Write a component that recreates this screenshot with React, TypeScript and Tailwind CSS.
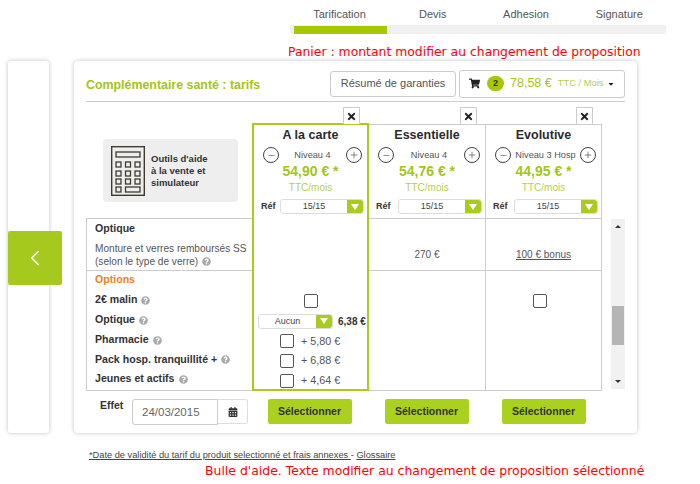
import React from "react";
import { FaShoppingCart, FaCalendarAlt, FaQuestionCircle, FaTimes, FaCaretDown } from "react-icons/fa";
import { ChevronLeft, Minus, Plus } from "lucide-react";

const plans = [
  { name: "A la carte", level: "Niveau 4", price: "54,90 €", selected: true },
  { name: "Essentielle", level: "Niveau 4", price: "54,76 €", selected: false },
  { name: "Evolutive", level: "Niveau 3 Hosp", price: "44,95 €", selected: false },
];

const Help = () => (
  <FaQuestionCircle className="inline-block w-[9px] h-[9px] ml-1 text-[#a9a9a9] align-[-1px]" />
);

const Arrow = () => (
  <span className="w-[16px] self-stretch bg-[#a9cc1c] rounded-r-[2px] flex items-center justify-center">
    <span className="w-0 h-0 border-x-[4px] border-x-transparent border-t-[6px] border-t-white" />
  </span>
);

const Check = () => (
  <span className="block w-[14px] h-[14px] border border-[#555] rounded-[2px] bg-white" />
);

const Round = ({ children }: { children: React.ReactNode }) => (
  <span className="w-[16px] h-[16px] shrink-0 rounded-full border border-[#444] flex items-center justify-center text-[#444]">
    {children}
  </span>
);

const Calculator = () => (
  <svg width="34" height="50" viewBox="0 0 34 50" className="shrink-0" fill="none" stroke="#3d3a2e" strokeWidth="1.3">
    <rect x="0.7" y="0.7" width="32.6" height="48.6" strokeWidth="1.4" />
    <rect x="5" y="6" width="24" height="5" />
    <rect x="5" y="16" width="5" height="5" />
    <rect x="14.5" y="16" width="5" height="5" />
    <rect x="24" y="16" width="5" height="5" />
    <rect x="5" y="25" width="5" height="5" />
    <rect x="14.5" y="25" width="5" height="5" />
    <rect x="24" y="25" width="5" height="5" />
    <rect x="5" y="33" width="5" height="5" />
    <rect x="14.5" y="33" width="5" height="5" />
    <rect x="24" y="33" width="5" height="5" />
    <rect x="5" y="41" width="5" height="5" />
    <rect x="14.5" y="41" width="14.5" height="5" />
  </svg>
);

const PlanHeader = ({ plan }: { plan: (typeof plans)[number] }) => (
  <div className="relative h-[93px] flex flex-col items-center pt-[2px]">
    <span
      className={`absolute -top-[18px] ${plan.selected ? "right-[7px]" : "right-[8px]"} w-[17px] h-[17px] bg-white border border-b-0 border-[#ccc] flex items-center justify-center text-[#222]`}
    >
      <FaTimes className="w-[11px] h-[11px]" />
    </span>
    <div className="text-[12.5px] leading-[17px] font-bold text-[#2b2b2b]">{plan.name}</div>
    <div className="w-full pl-[9px] pr-[5px] mt-[3px] flex items-center justify-between">
      <Round><Minus size={9} strokeWidth={1.5} /></Round>
      <span className="text-[9.2px] leading-[16px] text-[#555] whitespace-nowrap">{plan.level}</span>
      <Round><Plus size={10} strokeWidth={1.5} /></Round>
    </div>
    <div className="text-[14px] leading-[17px] font-bold text-[#a3c617]">{plan.price} *</div>
    <div className="text-[10px] leading-[14px] mt-[1px] text-[#b5cf4a]">TTC/mois</div>
    <div className="w-full pl-[7px] pr-[3px] mt-[4px] flex items-center justify-between">
      <span className="text-[9px] font-bold text-[#333]">Réf</span>
      <span className="w-[84px] h-[15px] flex border border-[#ddd] rounded-[3px] overflow-hidden">
        <span className="flex-1 text-center text-[9px] leading-[13px] text-[#444]">15/15</span>
        <Arrow />
      </span>
    </div>
  </div>
);

const options = [
  { label: "2€ malin", h: "h-[20px]" },
  { label: "Optique", h: "h-[20px]" },
  { label: "Pharmacie", h: "h-[20px]" },
  { label: "Pack hosp. tranquillité +", h: "h-[19px]" },
  { label: "Jeunes et actifs", h: "h-[20px]" },
];

const PriceCheck = ({ price, h }: { price: string; h: string }) => (
  <div className={`${h} flex items-center pl-[26px] gap-[7px]`}>
    <Check />
    <span className="text-[10.8px] text-[#555]">{price}</span>
  </div>
);

export default function App() {
  return (
    <div className="w-[700px] h-[484px] overflow-hidden bg-white font-['Liberation_Sans',Arial,sans-serif] text-[#333]">
      {/* etapes */}
      <div className="ml-[290px] w-[376px] pt-[7px]">
        <div className="grid grid-cols-4 text-[11px] leading-[14px] text-[#555] text-center pl-[3px]">
          <span className="w-[93px]">Tarification</span>
          <span className="w-[93px]">Devis</span>
          <span className="w-[93px]">Adhesion</span>
          <span className="w-[93px]">Signature</span>
        </div>
        <div className="mt-[4px] h-[9px] bg-[#f0f0f0] rounded-[2px] pl-[4px] pt-[1px]">
          <div className="w-[93px] h-[8px] bg-[#a5c800]" />
        </div>
      </div>
      <div className="ml-[288px] mt-[9px] h-[18px] text-[12.4px] leading-[18px] text-[#f00] font-['DejaVu_Sans',sans-serif] whitespace-nowrap">
        Panier : montant modifier au changement de proposition
      </div>

      <div className="flex pl-[8px] gap-[25px]">
        {/* panneau gauche */}
        <div className="relative w-[41px] h-[372px] bg-white rounded-[3px] shadow-[0_0_4px_rgba(0,0,0,0.25)]">
          <div className="absolute left-0 top-[170px] w-[54px] h-[54px] bg-[#a6c91e] rounded-[2px] flex items-center justify-center text-white">
            <ChevronLeft size={26} strokeWidth={1.5} />
          </div>
        </div>

        {/* carte */}
        <div className="w-[563px] h-[372px] bg-white rounded-[4px] shadow-[0_0_4px_rgba(0,0,0,0.25)] px-[12px]">
          <div className="h-[41px] flex items-center justify-between border-b border-[#ccc]">
            <div className="text-[12.4px] font-bold text-[#a3c617] pt-[8px]">Complémentaire santé : tarifs</div>
            <div className="flex items-center gap-[3px] pt-[5px]">
              <div className="w-[126px] h-[26px] border border-[#ccc] rounded-[3px] flex items-center justify-center text-[11px] text-[#555]">
                Résumé de garanties
              </div>
              <div className="w-[166px] h-[28px] border border-[#ccc] rounded-[3px] flex items-center pl-[9px] pr-[9px]">
                <FaShoppingCart className="w-[11px] h-[11px] text-[#222]" />
                <span className="ml-[7px] w-[17px] h-[15px] rounded-full bg-[#a5c800] text-[9px] font-bold text-[#333] flex items-center justify-center">2</span>
                <span className="ml-[6px] text-[12.5px] text-[#a3c617] whitespace-nowrap">78,58 €</span>
                <span className="ml-[6px] text-[9.4px] text-[#b5cf4a] whitespace-nowrap">TTC / Mois</span>
                <FaCaretDown className="ml-auto w-[8px] h-[8px] text-[#222]" />
              </div>
            </div>
          </div>

          <div className="mt-[22px] flex">
            <div className="w-[516px] grid grid-cols-[166px_117px_117px_116px]">
              {/* colonne libelles */}
              <div>
                <div className="h-[95px] pl-[17px] pt-[15px] border-b border-[#ccc]">
                  <div className="w-[135px] h-[63px] bg-[#eee] rounded-[4px] flex items-center pl-[8px] gap-[6px]">
                    <Calculator />
                    <div className="text-[9.5px] leading-[12px] font-bold text-[#333]">
                      Outils d'aide<br />à la vente et<br />simulateur
                    </div>
                  </div>
                </div>
                <div className="border-l border-[#ccc] border-b">
                  <div className="h-[52px] pl-[8px] border-b border-[#ccc]">
                    <div className="pt-[2px] text-[10.6px] leading-[14px] font-bold text-[#333]">Optique</div>
                    <div className="mt-[7px] text-[10.1px] leading-[13px] text-[#555] whitespace-nowrap">
                      Monture et verres remboursés SS<br />(selon le type de verre)<Help />
                    </div>
                  </div>
                  <div className="h-[119px] pl-[8px]">
                    <div className="h-[19px] text-[10.6px] leading-[16px] font-bold text-[#f07f1d]">Options</div>
                    {options.map((o) => (
                      <div key={o.label} className={`${o.h} flex items-center text-[10.6px] font-bold text-[#333] whitespace-nowrap`}>
                        {o.label}<Help />
                      </div>
                    ))}
                  </div>
                </div>
              </div>

              {/* A la carte */}
              <div className="-mt-[1px] h-[268px] border-2 border-[#a9cc1c] relative z-10 bg-white">
                <PlanHeader plan={plans[0]} />
                <div className="h-[73px]" />
                <div className="h-[20px] flex justify-center items-center"><Check /></div>
                <div className="h-[20px] flex items-center pl-[4px]">
                  <span className="w-[75px] h-[15px] flex border border-[#ddd] rounded-[3px] overflow-hidden">
                    <span className="flex-1 text-center text-[9px] leading-[13px] text-[#444]">Aucun</span>
                    <Arrow />
                  </span>
                  <span className="ml-[5px] text-[10px] font-bold text-[#333] whitespace-nowrap">6,38 €</span>
                </div>
                <PriceCheck price="+ 5,80 €" h="h-[20px]" />
                <PriceCheck price="+ 6,88 €" h="h-[19px]" />
                <PriceCheck price="+ 4,64 €" h="h-[21px]" />
              </div>

              {/* Essentielle */}
              <div className="border-t border-[#ccc] -ml-[1px] pl-[1px] border-r">
                <PlanHeader plan={plans[1]} />
                <div className="border-t border-b border-[#ccc] h-[173px]">
                  <div className="h-[52px] border-b border-[#ccc] flex items-center justify-center pt-[20px] text-[10px] text-[#555]">270 €</div>
                </div>
              </div>

              {/* Evolutive */}
              <div className="border-t border-r border-[#ccc]">
                <PlanHeader plan={plans[2]} />
                <div className="border-t border-b border-[#ccc] h-[173px]">
                  <div className="h-[52px] border-b border-[#ccc] flex items-center justify-center pt-[20px] text-[10px] text-[#555] underline">100 € bonus</div>
                  <div className="pt-[23px] pr-[7px] flex justify-center"><Check /></div>
                </div>
              </div>
            </div>

            {/* ascenseur */}
            <div className="ml-[9px] mt-[95px] w-[14px] h-[170px] bg-[#f1f1f1] flex flex-col items-center justify-between py-[6px] relative">
              <span className="w-0 h-0 border-x-[3px] border-x-transparent border-b-[3px] border-b-[#333]" />
              <span className="absolute left-[1px] top-[87px] w-[12px] h-[39px] bg-[#b5b5b5]" />
              <span className="w-0 h-0 border-x-[3px] border-x-transparent border-t-[3px] border-t-[#333]" />
            </div>
          </div>

          {/* effet + boutons */}
          <div className="mt-[8px] flex items-start">
            <div className="w-[165px] flex">
              <span className="ml-[14px] w-[32px] text-[10.5px] leading-[12px] font-bold text-[#333]">Effet</span>
              <div className="flex">
                <div className="w-[86px] h-[26px] border border-[#ccc] rounded-l-[3px] pl-[9px] text-[11.5px] leading-[24px] text-[#666]">24/03/2015</div>
                <div className="w-[30px] h-[25px] border border-l-0 border-[#ddd] rounded-r-[3px] flex items-center justify-center text-[#333]">
                  <FaCalendarAlt className="w-[10px] h-[10px]" />
                </div>
              </div>
            </div>
            {[0, 1, 2].map((i) => (
              <div key={i} className="w-[117px] flex justify-center">
                <button className="w-[84px] h-[25px] bg-[#abd11f] rounded-[2px] text-[10.5px] font-bold text-[#333]">Sélectionner</button>
              </div>
            ))}
          </div>
        </div>
      </div>

      <div className="ml-[89px] mt-[15px] text-[9.25px] leading-[14px] text-[#444] whitespace-nowrap">
        <span className="underline">*Date de validité du tarif du produit selectionné et frais annexes </span> - <span className="underline">Glossaire</span>
      </div>
      <div className="ml-[205px] text-[12.45px] leading-[18px] text-[#f00] font-['DejaVu_Sans',sans-serif] whitespace-nowrap">
        Bulle d'aide. Texte modifier au changement de proposition sélectionné
      </div>
    </div>
  );
}
